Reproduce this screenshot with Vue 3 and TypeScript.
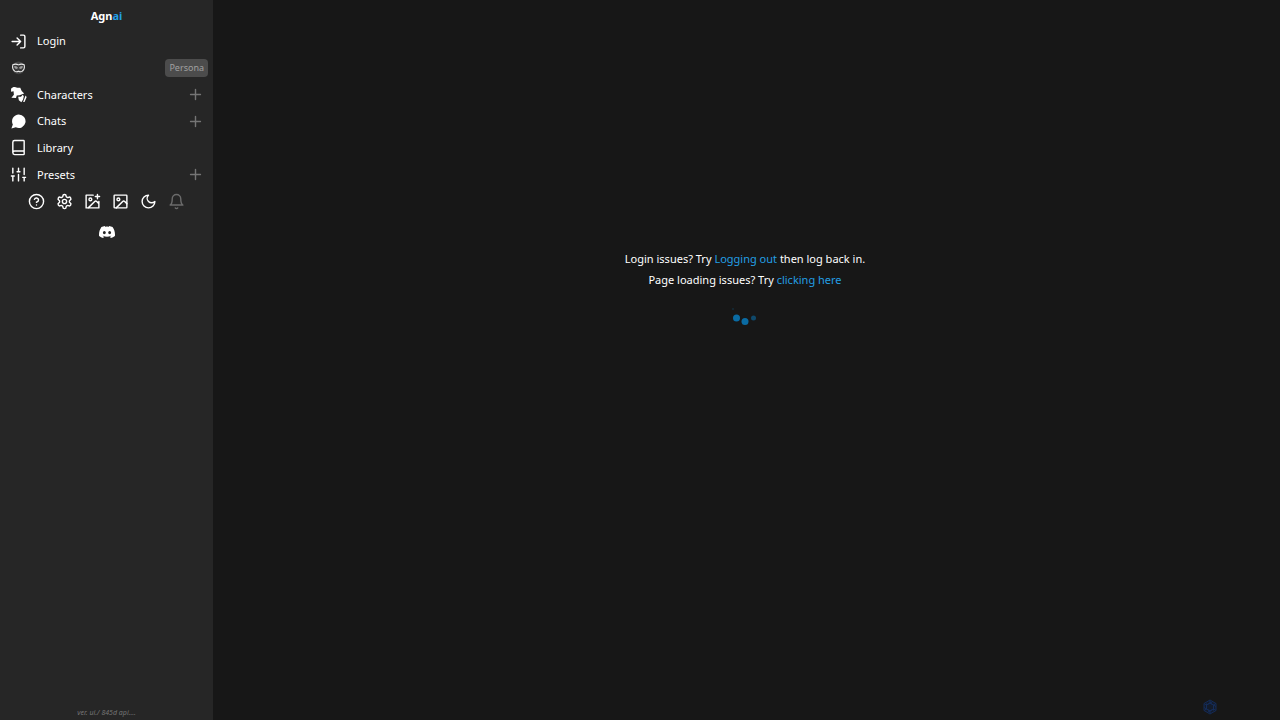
<script setup lang="ts">
interface NavItem {
  id: string
  label: string
  add?: boolean
}

const items: NavItem[] = [
  { id: 'characters', label: 'Characters', add: true },
  { id: 'chats', label: 'Chats', add: true },
  { id: 'library', label: 'Library' },
  { id: 'presets', label: 'Presets', add: true },
]
</script>

<template>
  <div class="app">
    <aside class="sidebar">
      <a class="brand" href="#">Agn<span class="accent">ai</span></a>

      <nav class="nav">
        <div class="row">
          <a class="link" href="#login">
            <svg class="icon line" viewBox="0 0 24 24"><path d="M15 3h4a2 2 0 0 1 2 2v14a2 2 0 0 1-2 2h-4M10 17l5-5-5-5M15 12H3" /></svg>
            <span>Login</span>
          </a>
        </div>
        <div class="row">
          <a class="link" href="#profile" aria-label="Profile">
            <svg class="icon" viewBox="0 0 24 24">
              <circle cx="12" cy="12.500" r="9" fill="#444" />
              <path d="M4 8c2.500-1 5.500-1 8 .3C14.500 7 17.500 7 20 8c.8 3.500.2 7-2.500 9-1.500 1.200-3.500 1.200-5.500.2-2 1-4 1-5.500-.2C3.800 15 3.200 11.500 4 8z" fill="#3a3a3a" stroke="#e8e8e8" stroke-width="1.500" />
              <path d="M6.500 11c2-.2 3.500.4 4 1.800-1.700.6-3.500.1-4-1.800zM17.500 11c-2-.2-3.500.4-4 1.800 1.700.6 3.500.1 4-1.800z" fill="#171717" stroke="#e8e8e8" stroke-width="1.200" />
            </svg>
          </a>
          <button class="persona" type="button">Persona</button>
        </div>
        <div v-for="item in items" :key="item.id" class="row">
          <a class="link" :href="'#' + item.id">
            <svg v-if="item.id === 'characters'" class="icon solid" viewBox="0 0 24 24">
              <path d="M1.500 4C4 .5 7.500 1 10 2.500l4.500 0 2 4.500 3.500 3.500-6.500 2.500-4 .5-1 3.500-6.500-.5 3.500-4L5 7.500 1.500 8z" />
              <path d="m11.500 15 4 0 2.500-2.500 1.500 2-1 4.500-2.500 4-3.500-3z" />
              <path d="m22 13.500 1.500 2-3 7-2 0z" />
            </svg>
            <svg v-else-if="item.id === 'chats'" class="icon solid" viewBox="0 0 24 24"><path d="M12.400 2.200a9.500 9.500 0 1 1-4.200 18L2 22l2-5.800A9.500 9.500 0 0 1 12.400 2.200z" /></svg>
            <svg v-else-if="item.id === 'library'" class="icon line" viewBox="0 0 24 24"><path d="M4 19.500v-15A2.500 2.500 0 0 1 6.500 2H19a1 1 0 0 1 1 1v18a1 1 0 0 1-1 1H6.500a2.500 2.500 0 0 1 0-5H20" /></svg>
            <svg v-else class="icon line" viewBox="0 0 24 24"><path d="M4 21v-7M4 10V3M12 21v-9M12 8V3M20 21v-5M20 12V3M2 14h4M10 8h4M18 16h4" /></svg>
            <span>{{ item.label }}</span>
          </a>
          <button v-if="item.add" class="add" type="button" :aria-label="'Add to ' + item.label">
            <svg class="icon line" viewBox="0 0 24 24"><path d="M5 12h14M12 5v14" /></svg>
          </button>
        </div>
      </nav>

      <div class="tools">
        <button type="button" aria-label="Help"><svg class="icon line" viewBox="0 0 24 24"><circle cx="12" cy="12" r="10" /><path d="M9.090 9a3 3 0 0 1 5.830 1c0 2-3 3-3 3M12 17h.01" /></svg></button>
        <button type="button" aria-label="Settings"><svg class="icon line" viewBox="0 0 24 24"><path d="M12.220 2h-.44a2 2 0 0 0-2 2v.18a2 2 0 0 1-1 1.730l-.43.25a2 2 0 0 1-2 0l-.15-.08a2 2 0 0 0-2.730.73l-.22.38a2 2 0 0 0 .73 2.730l.15.1a2 2 0 0 1 1 1.720v.51a2 2 0 0 1-1 1.740l-.15.09a2 2 0 0 0-.73 2.730l.22.38a2 2 0 0 0 2.730.73l.15-.08a2 2 0 0 1 2 0l.43.25a2 2 0 0 1 1 1.730V20a2 2 0 0 0 2 2h.44a2 2 0 0 0 2-2v-.18a2 2 0 0 1 1-1.730l.43-.25a2 2 0 0 1 2 0l.15.08a2 2 0 0 0 2.730-.73l.22-.39a2 2 0 0 0-.73-2.730l-.15-.08a2 2 0 0 1-1-1.740v-.5a2 2 0 0 1 1-1.740l.15-.09a2 2 0 0 0 .73-2.730l-.22-.38a2 2 0 0 0-2.730-.73l-.15.08a2 2 0 0 1-2 0l-.43-.25a2 2 0 0 1-1-1.730V4a2 2 0 0 0-2-2z" /><circle cx="12" cy="12" r="3" /></svg></button>
        <button type="button" aria-label="Add image"><svg class="icon line" viewBox="0 0 24 24"><path d="M13 3H3v18h18v-9M16 5h6M19 2v6M21 15l-3.090-3.090a2 2 0 0 0-2.820 0L6 21" /><circle cx="9" cy="9" r="2" /></svg></button>
        <button type="button" aria-label="Images"><svg class="icon line" viewBox="0 0 24 24"><rect x="3" y="3" width="18" height="18" rx="1" /><circle cx="9" cy="9" r="2" /><path d="m21 15-3.090-3.090a2 2 0 0 0-2.820 0L6 21" /></svg></button>
        <button type="button" aria-label="Dark mode"><svg class="icon line" viewBox="0 0 24 24"><path d="M12 3a6 6 0 0 0 9 9 9 9 0 1 1-9-9z" /></svg></button>
        <button class="muted" type="button" aria-label="Notifications"><svg class="icon line" viewBox="0 0 24 24"><path d="M6 8a6 6 0 0 1 12 0c0 7 3 9 3 9H3s3-2 3-9M10.300 21a1.940 1.940 0 0 0 3.400 0" /></svg></button>
      </div>

      <a class="discord" href="#discord" aria-label="Discord">
        <svg viewBox="0 0 24 24"><path d="M20.317 4.370a19.790 19.790 0 0 0-4.885-1.515.074.074 0 0 0-.079.037c-.21.375-.444.864-.608 1.250a18.270 18.270 0 0 0-5.487 0 12.640 12.640 0 0 0-.617-1.250.077.077 0 0 0-.079-.037A19.736 19.736 0 0 0 3.677 4.370a.07.07 0 0 0-.032.027C.533 9.046-.32 13.580.099 18.057a.082.082 0 0 0 .031.057 19.900 19.900 0 0 0 5.993 3.030.078.078 0 0 0 .084-.028 14.090 14.090 0 0 0 1.226-1.994.076.076 0 0 0-.041-.106 13.107 13.107 0 0 1-1.872-.892.077.077 0 0 1-.008-.128c.126-.094.252-.192.372-.292a.074.074 0 0 1 .077-.01c3.928 1.793 8.180 1.793 12.062 0a.074.074 0 0 1 .078.01c.12.098.246.198.373.292a.077.077 0 0 1-.006.127 12.299 12.299 0 0 1-1.873.892.077.077 0 0 0-.041.107c.36.698.772 1.362 1.225 1.993a.076.076 0 0 0 .084.028 19.839 19.839 0 0 0 6.002-3.030.077.077 0 0 0 .032-.054c.5-5.177-.838-9.674-3.549-13.660a.061.061 0 0 0-.031-.03zM8.020 15.330c-1.183 0-2.157-1.085-2.157-2.419 0-1.333.956-2.419 2.157-2.419 1.210 0 2.176 1.096 2.157 2.420 0 1.333-.956 2.418-2.157 2.418zm7.975 0c-1.183 0-2.157-1.085-2.157-2.419 0-1.333.955-2.419 2.157-2.419 1.210 0 2.176 1.096 2.157 2.420 0 1.333-.946 2.418-2.157 2.418z" /></svg>
      </a>

      <footer class="version">ver. ui./ 845d api....</footer>
    </aside>

    <main class="main">
      <p>Login issues? Try <a href="#logout">Logging out</a> then log back in.</p>
      <p>Page loading issues? Try <a href="#reload">clicking here</a></p>
      <svg class="loader" viewBox="0 0 30 22" role="img" aria-label="Loading">
        <circle cx="3" cy="5" r="1" opacity=".25" />
        <circle cx="6.500" cy="14" r="3.500" />
        <circle cx="15" cy="17.500" r="3.500" />
        <circle cx="23.500" cy="14" r="2.500" opacity=".6" />
      </svg>
      <button class="badge" type="button" aria-label="Assistant">
        <svg viewBox="0 0 16 16">
          <path d="M8 1 14 4.500v7L8 15l-6-3.500v-7z" />
          <path d="M8 4 11.500 6v4L8 12l-3.500-2V6zM8 1v3l6 3.500M14 4.500 11.500 6v5.500M14 11.500 11.500 10 6 13M8 15v-3L2 8.500M2 11.500 4.500 10V4.500M2 4.500 4.500 6 10 3" />
        </svg>
      </button>
    </main>
  </div>
</template>

<style>
body {
  margin: 0;
  background: #171717;
}
</style>

<style scoped>
.app {
  display: grid;
  grid-template-columns: 213px 1fr;
  min-height: 100vh;
  color: #fff;
  font: 11px/16px "Noto Sans", "Open Sans", sans-serif;
}

a {
  color: inherit;
  text-decoration: none;
}

button {
  display: flex;
  padding: 0;
  border: 0;
  background: none;
  color: inherit;
  font: inherit;
  cursor: pointer;
}

.sidebar {
  display: flex;
  flex-direction: column;
  align-items: center;
  box-sizing: border-box;
  padding-top: 8px;
  background: #262626;
}

.brand {
  font-weight: 700;
}

.accent {
  color: #239fe4;
}

.nav {
  display: grid;
  grid-template-rows: repeat(6, 1fr);
  align-self: stretch;
  height: 160px;
  margin-top: 4px;
  padding: 0 5px 0 10px;
}

.row {
  display: flex;
  align-items: center;
  justify-content: space-between;
}

.link {
  display: flex;
  flex: 1;
  align-items: center;
  gap: 10px;
}

.icon {
  display: block;
  width: 17px;
  height: 17px;
}

.line {
  fill: none;
  stroke: currentColor;
  stroke-width: 2;
  stroke-linecap: round;
  stroke-linejoin: round;
}

.solid {
  fill: currentColor;
}

.persona {
  padding: 1px 4px;
  border-radius: 4px;
  background: #4c4c4c;
  color: #a0a0a0;
  font-size: 9px;
}

.add {
  margin-right: 4px;
  color: #757575;
}

.tools {
  display: flex;
  gap: 11px;
  margin-top: 5px;
}

.muted {
  color: #6b6b6b;
}

.discord {
  margin-top: 14px;
}

.discord svg {
  display: block;
  width: 16px;
  height: 16px;
  fill: #fff;
}

.version {
  margin-top: auto;
  color: #757575;
  font-size: 7px;
  line-height: 14px;
  font-style: italic;
}

.main {
  display: flex;
  flex-direction: column;
  align-items: center;
  gap: 5px;
  padding: 251px 3px 0 0;
}

.main p {
  margin: 0;
}

.main a {
  color: #239fe4;
}

.loader {
  width: 30px;
  height: 22px;
  margin-top: 11px;
  fill: #0a6ba3;
}

.badge {
  position: fixed;
  right: 62px;
  bottom: 5px;
}

.badge svg {
  width: 16px;
  height: 16px;
  fill: #141c2b;
  stroke: #152c58;
}
</style>
